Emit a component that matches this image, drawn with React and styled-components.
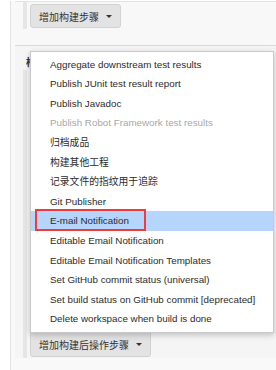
import React from 'react';
import styled, { createGlobalStyle } from 'styled-components';

const GlobalStyle = createGlobalStyle`
  html, body {
    margin: 0;
    padding: 0;
    background: #ffffff;
    font-family: 'Liberation Sans', 'Noto Sans CJK SC', Arial, sans-serif;
    color: #333;
  }
`;

const Page = styled.div`
  width: 276px;
  height: 370px;
  overflow: hidden;
  padding-left: 10px;
  box-sizing: border-box;
`;

const Container = styled.div`
  height: 100%;
  border-left: 1px solid #e2e2e2;
  background: #f9f9f9;
  padding-left: 4px;
`;

const TopSection = styled.div`
  height: 43px;
  margin-top: 1px;
  border-top: 1px solid #e4e4e4;
  border-bottom: 1px solid #d9d9d9;
  background: #f8f8f8;
  padding-left: 8px;
`;

const Chunk = styled.div`
  border-left: 4px solid #e6e6e6;
  padding-left: 3px;
  padding-top: ${p => p.$top || 0}px;
  height: ${p => p.$height}px;
  box-sizing: border-box;
`;

const PostSection = styled.div`
  background: #f5f5f5;
  padding-left: 8px;
  padding-top: 10px;
`;

const Label = styled.div`
  font-family: 'Noto Sans CJK SC', sans-serif;
  font-size: 10px;
  font-weight: bold;
  line-height: 12px;
  padding-left: 3px;
  margin-bottom: 2px;
`;

const Button = styled.div`
  display: inline-flex;
  align-items: center;
  gap: 7px;
  height: ${p => p.$height}px;
  box-sizing: border-box;
  padding: 0 8px;
  background: #e3e3e3;
  border: 1px solid #d2d2d2;
  border-radius: 3px;
  font-family: 'Noto Sans CJK SC', sans-serif;
  font-size: 10px;
  color: #333;
`;

const Caret = styled.span`
  width: 0;
  height: 0;
  border-left: 3px solid transparent;
  border-right: 3px solid transparent;
  border-top: 3px solid #333;
`;

const Anchor = styled.div`
  position: relative;
  display: inline-block;
  vertical-align: top;
`;

const Menu = styled.ul`
  position: absolute;
  left: 0;
  bottom: calc(100% - 2px);
  width: 244px;
  box-sizing: border-box;
  margin: 0;
  padding: 3px 0;
  list-style: none;
  background: #fff;
  border: 1px solid #c9c9c9;
  box-shadow: 0 2px 6px rgba(0, 0, 0, 0.22);
  z-index: 2;
`;

const Item = styled.li`
  position: relative;
  height: 19.6px;
  line-height: 19.6px;
  padding-left: 19px;
  font-size: 9.8px;
  white-space: nowrap;
  color: ${p => (p.$disabled ? '#a8a8a8' : '#2b2b2b')};
  background: ${p => (p.$active ? '#b5d5fc' : 'transparent')};

  ${p => p.$marked && `
    &::after {
      content: '';
      position: absolute;
      left: 4px;
      top: -2px;
      width: 111px;
      height: 22px;
      box-sizing: border-box;
      border: 2px solid #ee3b3b;
    }
  `}
`;

const items = [
  { label: 'Aggregate downstream test results' },
  { label: 'Publish JUnit test result report' },
  { label: 'Publish Javadoc' },
  { label: 'Publish Robot Framework test results', disabled: true },
  { label: '归档成品' },
  { label: '构建其他工程' },
  { label: '记录文件的指纹用于追踪' },
  { label: 'Git Publisher' },
  { label: 'E-mail Notification', active: true, marked: true },
  { label: 'Editable Email Notification' },
  { label: 'Editable Email Notification Templates' },
  { label: 'Set GitHub commit status (universal)' },
  { label: 'Set build status on GitHub commit [deprecated]' },
  { label: 'Delete workspace when build is done' },
];

export default function App() {
  return (
    <>
      <GlobalStyle />
      <Page>
        <Container>
          <TopSection>
            <Chunk $top={2} $height={27}>
              <Button $height={24}>
                增加构建步骤
                <Caret />
              </Button>
            </Chunk>
          </TopSection>
          <PostSection>
            <Label>构建后操作</Label>
            <Chunk $top={261} $height={288}>
              <Anchor>
                <Menu>
                  {items.map(it => (
                    <Item
                      key={it.label}
                      $disabled={it.disabled}
                      $active={it.active}
                      $marked={it.marked}
                    >
                      {it.label}
                    </Item>
                  ))}
                </Menu>
                <Button $height={26}>
                  增加构建后操作步骤
                  <Caret />
                </Button>
              </Anchor>
            </Chunk>
          </PostSection>
        </Container>
      </Page>
    </>
  );
}
